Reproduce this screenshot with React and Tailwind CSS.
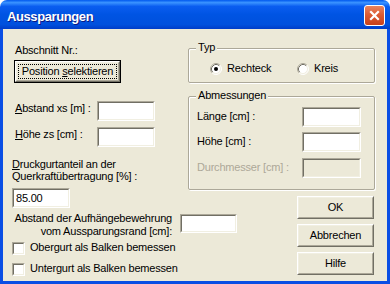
import React from "react";

function Sunken({ className = "", disabled = false, children }) {
  return (
    <div className={"border border-t-[#ACA899] border-l-[#ACA899] border-b-white border-r-white " + className}>
      <div
        className={
          "h-full w-full border border-t-[#716F64] border-l-[#716F64] border-b-[#F1EFE2] border-r-[#F1EFE2] flex items-center pl-[2px] " +
          (disabled ? "bg-[#ECE9D8]" : "bg-white")
        }
      >
        {children}
      </div>
    </div>
  );
}

function Button({ className = "", children, isDefault = false }) {
  if (isDefault) {
    return (
      <div className={"border border-black " + className}>
        <div className="h-full w-full border border-t-white border-l-white border-b-[#716F64] border-r-[#716F64]">
          <div className="h-full w-full border border-t-[#F1EFE2] border-l-[#F1EFE2] border-b-[#ACA899] border-r-[#ACA899] bg-[#ECE9D8] p-[1px]">
            <div className="h-full w-full border border-dotted border-black flex items-center justify-center">
              {children}
            </div>
          </div>
        </div>
      </div>
    );
  }
  return (
    <div className={"border border-t-white border-l-white border-b-[#716F64] border-r-[#716F64] " + className}>
      <div className="h-full w-full border border-t-[#F1EFE2] border-l-[#F1EFE2] border-b-[#ACA899] border-r-[#ACA899] bg-[#ECE9D8] flex items-center justify-center">
        {children}
      </div>
    </div>
  );
}

function Radio({ checked }) {
  return (
    <svg width="12" height="12" viewBox="0 0 12 12" className="shrink-0">
      <circle cx="6" cy="6" r="5" fill="white" />
      <path d="M2.11 9.89 A5.5 5.5 0 0 1 9.89 2.11" fill="none" stroke="#ACA899" strokeWidth="1" />
      <path d="M9.89 2.11 A5.5 5.5 0 0 1 2.11 9.89" fill="none" stroke="#FFFFFF" strokeWidth="1" />
      <path d="M2.82 9.18 A4.5 4.5 0 0 1 9.18 2.82" fill="none" stroke="#716F64" strokeWidth="1" />
      <path d="M9.18 2.82 A4.5 4.5 0 0 1 2.82 9.18" fill="none" stroke="#F1EFE2" strokeWidth="1" />
      {checked && <circle cx="6" cy="6" r="2" fill="black" />}
    </svg>
  );
}

function Group({ className = "", legend, children }) {
  return (
    <div
      className={
        "relative border border-[#ACA899] rounded-[2px] shadow-[inset_1px_1px_0_#ffffff,1px_1px_0_#ffffff] " + className
      }
    >
      <span className="absolute left-[7px] -top-[8px] bg-[#ECE9D8] px-[2px] leading-[13px]">{legend}</span>
      {children}
    </div>
  );
}

function Check({ label, className = "" }) {
  return (
    <div className={"flex items-start " + className}>
      <Sunken className="w-[13px] h-[13px] shrink-0" />
      <span className="ml-[5px] -mt-[1px] leading-[13px]">{label}</span>
    </div>
  );
}

export default function App() {
  return (
    <div className="w-[390px] h-[284px] flex flex-col bg-white font-['Liberation_Sans',Arial,sans-serif] text-[11px] tracking-[-0.2px] text-black">
      {/* Title bar */}
      <div className="h-[29px] shrink-0 rounded-t-[7px] flex items-start justify-between bg-[linear-gradient(180deg,#0058EE_0%,#3A93FF_9%,#0A5DF0_22%,#0054E3_50%,#0050DD_85%,#003CC8_100%)]">
        <span className="mt-[9px] ml-[7px] text-[13px] leading-[15px] font-bold tracking-[-0.4px] text-white [text-shadow:1px_1px_0_#0a1883]">
          Aussparungen
        </span>
        <div className="mt-[5px] mr-[5px] w-[21px] h-[21px] rounded-[3px] border border-white bg-[linear-gradient(180deg,#E8845E_0%,#DD5C34_45%,#C8401A_100%)] flex items-center justify-center">
          <svg width="13" height="13" viewBox="0 0 13 13">
            <path d="M3 3 L10 10 M10 3 L3 10" stroke="white" strokeWidth="2.2" strokeLinecap="square" />
          </svg>
        </div>
      </div>

      {/* Client area */}
      <div className="flex-1 bg-[#ECE9D8] border-l-[3px] border-r-[3px] border-b-[3px] border-[#0A4EE4] flex pl-[9px]">
        {/* Left column */}
        <div className="w-[176px] shrink-0 flex flex-col items-start">
          <div className="mt-[15px] ml-[3px] leading-[13px]">Abschnitt Nr.:</div>
          <Button isDefault className="mt-[3px] ml-[2px] w-[107px] h-[23px]">
            <span className="leading-[13px]">
              Position <span className="underline">s</span>elektieren
            </span>
          </Button>
          <div className="mt-[18px] flex items-start">
            <span className="ml-[3px] w-[82px] mt-[1px] leading-[13px]">
              <span className="underline">A</span>bstand xs [m] :
            </span>
            <Sunken className="w-[58px] h-[20px]" />
          </div>
          <div className="mt-[6px] flex items-start">
            <span className="ml-[3px] w-[82px] mt-[1px] leading-[13px]">
              <span className="underline">H</span>öhe zs [cm] :
            </span>
            <Sunken className="w-[58px] h-[20px]" />
          </div>
          <div className="mt-[11px] leading-[12px]">
            <div>
              <span className="underline">D</span>ruckgurtanteil an der
            </div>
            <div>Querkraftübertragung [%] :</div>
          </div>
          <Sunken className="mt-[6px] w-[58px] h-[20px]">
            <span className="leading-[13px]">85.00</span>
          </Sunken>
          <div className="mt-[4px] flex items-start">
            <div className="w-[160px] text-right leading-[12.5px]">
              <div>Abstand der Aufhängebewehrung</div>
              <div>vom Aussparungsrand [cm]:</div>
            </div>
            <Sunken className="ml-[8px] mt-[2px] w-[57px] h-[19px] shrink-0" />
          </div>
          <Check className="mt-[5px]" label="Obergurt als Balken bemessen" />
          <Check className="mt-[8px]" label="Untergurt als Balken bemessen" />
        </div>

        {/* Right column */}
        <div className="w-[187px] shrink-0 flex flex-col">
          <Group legend="Typ" className="mt-[19px] h-[35px]">
            <div className="pt-[13px] pl-[21px] flex items-center">
              <div className="w-[87px] flex items-center">
                <Radio checked />
                <span className="ml-[5px] leading-[13px]">Rechteck</span>
              </div>
              <div className="flex items-center">
                <Radio />
                <span className="ml-[5px] leading-[13px]">Kreis</span>
              </div>
            </div>
          </Group>
          <Group legend="Abmessungen" className="mt-[13px] h-[94px]">
            <div className="pt-[10px] pl-[8px] flex flex-col">
              <div className="flex items-start">
                <span className="w-[105px] mt-[3px] leading-[13px]">Länge [cm] :</span>
                <Sunken className="w-[59px] h-[20px]" />
              </div>
              <div className="mt-[5px] flex items-start">
                <span className="w-[105px] mt-[3px] leading-[13px]">Höhe [cm] :</span>
                <Sunken className="w-[59px] h-[20px]" />
              </div>
              <div className="mt-[6px] flex items-start">
                <span className="w-[105px] mt-[3px] leading-[13px] text-[#ACA899]">Durchmesser [cm] :</span>
                <Sunken disabled className="w-[59px] h-[20px]" />
              </div>
            </div>
          </Group>
          <div className="mt-[6px] mr-[1px] self-end flex flex-col gap-[5px]">
            <Button className="w-[77px] h-[23px]">
              <span className="leading-[13px]">OK</span>
            </Button>
            <Button className="w-[77px] h-[23px]">
              <span className="leading-[13px]">Abbrechen</span>
            </Button>
            <Button className="w-[77px] h-[23px]">
              <span className="leading-[13px]">Hilfe</span>
            </Button>
          </div>
        </div>
      </div>
    </div>
  );
}
